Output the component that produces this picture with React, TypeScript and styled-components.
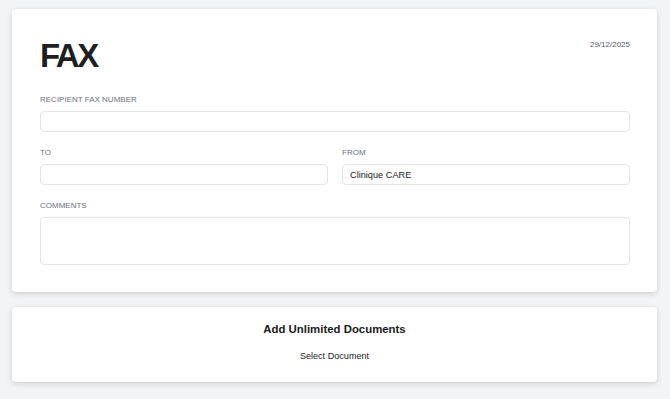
import React from 'react';
import styled, { createGlobalStyle } from 'styled-components';

const GlobalStyle = createGlobalStyle`
  html, body {
    margin: 0;
    padding: 0;
    background: #f3f4f6;
    font-family: "Liberation Sans", Arial, sans-serif;
  }
  * { box-sizing: border-box; }
`;

const Page = styled.div`
  display: flex;
  flex-direction: column;
  gap: 15px;
  padding: 9px 13px 16px 12px;
`;

const Card = styled.section`
  background: #fff;
  border-radius: 4px;
  box-shadow: 0 2px 6px rgba(0, 0, 0, 0.14), 0 0 2px rgba(0, 0, 0, 0.06);
`;

const FaxCard = styled(Card)`
  padding: 28px 27px 27px 28px;
  display: flex;
  flex-direction: column;
`;

const Header = styled.div`
  display: flex;
  justify-content: space-between;
  align-items: flex-start;
  margin-bottom: 23px;
`;

const Title = styled.h1`
  margin: 2px 0 0 0;
  font-size: 33px;
  line-height: 33px;
  font-weight: 700;
  letter-spacing: -2.5px;
  color: #1f1f1f;
`;

const DateText = styled.div`
  margin-top: 3px;
  font-size: 8px;
  line-height: 10px;
  color: #555b63;
`;

const Fields = styled.div`
  display: flex;
  flex-direction: column;
  gap: 16px;
`;

const Row = styled.div`
  display: grid;
  grid-template-columns: 1fr 1fr;
  gap: 14px;
`;

const Field = styled.label`
  display: flex;
  flex-direction: column;
  gap: 6px;
`;

const Label = styled.span`
  font-size: 8px;
  line-height: 10px;
  color: #6b7280;
  text-transform: uppercase;
`;

const Input = styled.input`
  height: 21px;
  width: 100%;
  padding: 0 7px;
  border: 1px solid #e3e5e8;
  border-radius: 4px;
  background: #fff;
  font-family: inherit;
  font-size: 9.2px;
  color: #1a1a1a;
  outline: none;
`;

const TextArea = styled.textarea`
  height: 48px;
  width: 100%;
  padding: 5px 7px;
  border: 1px solid #e3e5e8;
  border-radius: 4px;
  background: #fff;
  font-family: inherit;
  font-size: 9.2px;
  resize: none;
  outline: none;
  display: block;
`;

const DocCard = styled(Card)`
  padding: 15px 20px 20px;
  display: flex;
  flex-direction: column;
  align-items: center;
  gap: 15px;
`;

const DocTitle = styled.h2`
  margin: 0;
  font-size: 11.4px;
  line-height: 14px;
  font-weight: 700;
  color: #1a1a1a;
`;

const SelectButton = styled.button`
  border: none;
  background: none;
  padding: 0;
  font-family: inherit;
  font-size: 9.1px;
  line-height: 11px;
  color: #222;
  cursor: pointer;
`;

export default function App() {
  return (
    <>
      <GlobalStyle />
      <Page>
        <FaxCard>
          <Header>
            <Title>FAX</Title>
            <DateText>29/12/2025</DateText>
          </Header>
          <Fields>
            <Field>
              <Label>Recipient Fax Number</Label>
              <Input type="text" />
            </Field>
            <Row>
              <Field>
                <Label>To</Label>
                <Input type="text" />
              </Field>
              <Field>
                <Label>From</Label>
                <Input type="text" defaultValue="Clinique CARE" />
              </Field>
            </Row>
            <Field>
              <Label>Comments</Label>
              <TextArea />
            </Field>
          </Fields>
        </FaxCard>
        <DocCard>
          <DocTitle>Add Unlimited Documents</DocTitle>
          <SelectButton type="button">Select Document</SelectButton>
        </DocCard>
      </Page>
    </>
  );
}
